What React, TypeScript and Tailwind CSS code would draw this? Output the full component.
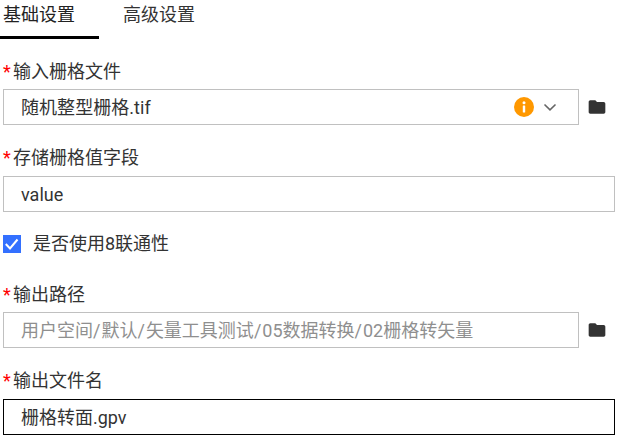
import React from "react";

function Folder() {
  return (
    <svg width="20" height="20" viewBox="0 0 24 24" className="block" fill="#333333">
      <path d="M10 4H4c-1.100 0-2 .9-2 2v12c0 1.100.9 2 2 2h16c1.100 0 2-.9 2-2V8c0-1.100-.9-2-2-2h-8l-2-2z" />
    </svg>
  );
}

function Label({ text }: { text: string }) {
  return (
    <div className="flex h-[24px] items-center pl-[3px] text-[18px] leading-[24px] text-[#333333]">
      <span className="w-[10px] text-[#ff0000]">*</span>
      <span>{text}</span>
    </div>
  );
}

function Slash() {
  return <span className="tracking-[1px]">/</span>;
}

export default function App() {
  return (
    <div className="h-[440px] w-[622px] overflow-hidden bg-white font-['Roboto','Noto_Sans_CJK_SC',sans-serif] text-[18px] text-[#333333]">
      <div className="flex h-[39px] items-start">
        <div className="h-[39px] w-[99px] border-b-[3px] border-black pl-[3px] pt-[3px] leading-[24px] text-[#222222]">基础设置</div>
        <div className="ml-[24px] pt-[3px] leading-[24px]">高级设置</div>
      </div>

      <div className="mt-[21px]"><Label text="输入栅格文件" /></div>
      <div className="mt-[5px] flex items-center">
        <div className="ml-[3px] flex h-[36px] w-[576px] items-center border border-[#c0c0c0] pl-[17px] pr-[21px]">
          <span className="flex-1 tracking-[0.05px]">随机整型栅格.tif</span>
          <svg width="20" height="20" viewBox="0 0 20 20" className="block">
            <circle cx="10" cy="10" r="10" fill="#ff9800" />
            <rect x="8.800" y="8.500" width="2.400" height="7" rx="0.500" fill="#ffffff" />
            <circle cx="10" cy="5.800" r="1.500" fill="#ffffff" />
          </svg>
          <svg width="14" height="14" viewBox="0 0 14 14" className="ml-[9px] block" fill="none" stroke="#666666" strokeWidth="1.600">
            <path d="M1.500 4.500L7 9.800L12.500 4.500" />
          </svg>
        </div>
        <div className="ml-[8px]"><Folder /></div>
      </div>

      <div className="mt-[21px]"><Label text="存储栅格值字段" /></div>
      <div className="ml-[3px] mt-[6px] flex h-[36px] w-[612px] items-center border border-[#c0c0c0] pl-[17px]">value</div>

      <div className="ml-[3px] mt-[23px] flex h-[18px] items-center">
        <svg width="18" height="18" viewBox="0 0 18 18" className="block">
          <rect width="18" height="18" fill="#3370ff" />
          <path d="M2.800 9L7 13.500L14.500 4.500" fill="none" stroke="#ffffff" strokeWidth="2" />
        </svg>
        <span className="ml-[12px] leading-[18px]">是否使用8联通性</span>
      </div>

      <div className="mt-[30px]"><Label text="输出路径" /></div>
      <div className="mt-[5px] flex items-center">
        <div className="ml-[3px] flex h-[36px] w-[576px] items-center border border-[#c0c0c0] pl-[17px] text-[#8f8f8f]">
          <span>用户空间<Slash />默认<Slash />矢量工具测试<Slash />05数据转换<Slash />02栅格转矢量</span>
        </div>
        <div className="ml-[8px]"><Folder /></div>
      </div>

      <div className="mt-[21px]"><Label text="输出文件名" /></div>
      <div className="ml-[3px] mt-[6px] flex h-[36px] w-[612px] items-center border border-black pl-[17px]">栅格转面.gpv</div>
    </div>
  );
}
